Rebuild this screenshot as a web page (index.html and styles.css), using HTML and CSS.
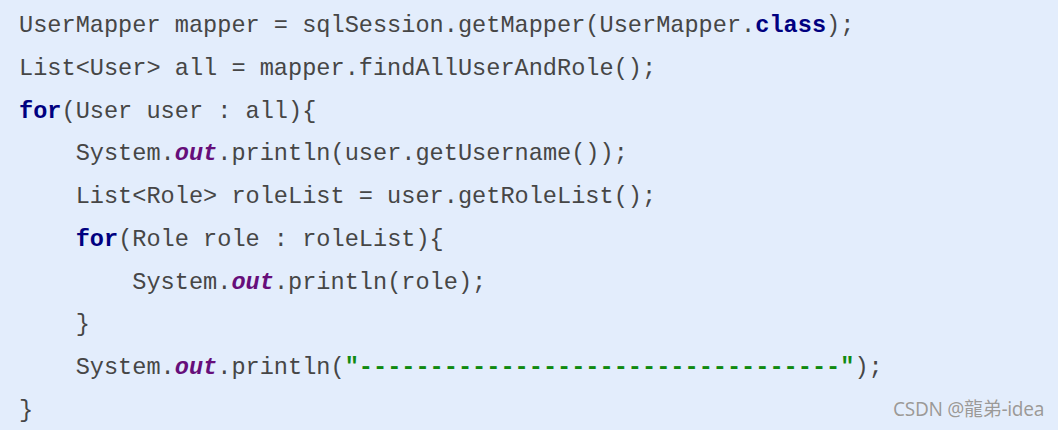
FILE: index.html
```html
<!DOCTYPE html>
<html lang="zh">
<head>
<meta charset="UTF-8">
<title>UserMapper</title>
<link rel="stylesheet" href="styles.css">
</head>
<body>

<div class="code-box">
  <pre class="code"><code>UserMapper mapper = sqlSession.getMapper(UserMapper.<b class="kw">class</b>);
List&lt;User&gt; all = mapper.findAllUserAndRole();
<b class="kw">for</b>(User user : all){
    System.<b class="field">out</b>.println(user.getUsername());
    List&lt;Role&gt; roleList = user.getRoleList();
    <b class="kw">for</b>(Role role : roleList){
        System.<b class="field">out</b>.println(role);
    }
    System.<b class="field">out</b>.println(<b class="str">"----------------------------------"</b>);
}</code></pre>

  <div class="watermark">CSDN @龍弟-idea</div>
</div>

</body>
</html>
```

FILE: styles.css
```css
html, body {
  margin: 0;
  padding: 0;
  background: #e3edfc;
}
.code-box {
  position: relative;
  width: 1058px;
  height: 430px;
  overflow: hidden;
  background: #e3edfc;
}
.code {
  margin: 0;
  padding: 5px 0 0 19px;
  font-family: "Liberation Mono", "Courier New", monospace;
  font-size: 23.6px;
  line-height: 42.75px;
  color: #464646;
}
.code code {
  font: inherit;
}
.kw {
  color: #000080;
  font-weight: bold;
}
.field {
  color: #660e7a;
  font-weight: bold;
  font-style: italic;
}
.str {
  color: #108a10;
  font-weight: bold;
}
.watermark {
  position: absolute;
  right: 14px;
  bottom: 8px;
  font-family: "Noto Sans", "Noto Sans CJK SC", sans-serif;
  font-size: 19px;
  letter-spacing: -0.3px;
  color: #9a9a9a;
  text-shadow: 0 0 1px #ffffff;
}
```
